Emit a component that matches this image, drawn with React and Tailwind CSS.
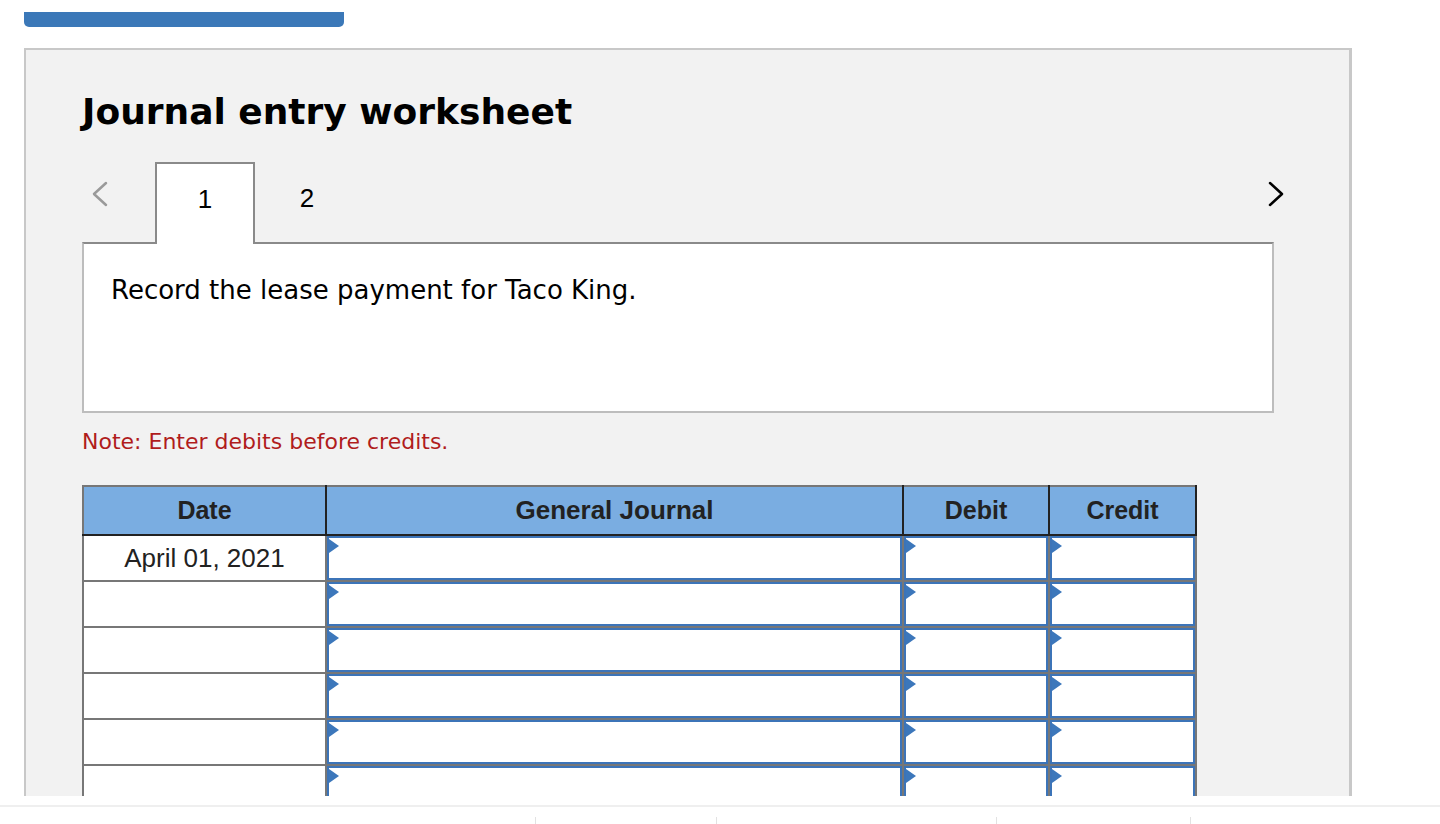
import React from "react";

function Tri() {
  return (
    <svg className="absolute left-0 top-[1px]" width="10" height="14" viewBox="0 0 10 14">
      <polygon points="0,0 10,7 0,14" fill="#3c77bb" />
    </svg>
  );
}

function InputCell() {
  return (
    <td className="border-2 border-[#777777] p-0 h-[46px]">
      <div className="relative h-full w-full border-2 border-[#3c74b8] bg-white">
        <Tri />
      </div>
    </td>
  );
}

export default function App() {
  const rows = ["April 01, 2021", "", "", "", "", ""];
  return (
    <div className="h-[824px] w-[1440px] overflow-hidden bg-white flex flex-col">
      <div className="h-[796px] overflow-hidden shrink-0">
        <div className="ml-[24px] mt-[12px] h-[15px] w-[320px] rounded-b-[5px] bg-[#3b78b8]" />
        <div className="ml-[24px] mt-[21px] w-[1328px] h-[1000px] border-2 border-r-[3px] border-[#c8c8c8] bg-[#f2f2f2] pl-[56px] pr-[76px]">
          <h1
            className="mt-[42px] text-[36px] font-bold leading-[40px] text-black"
            style={{ fontFamily: '"DejaVu Sans", Verdana, sans-serif' }}
          >
            Journal entry worksheet
          </h1>
          <div className="mt-[30px] flex items-end h-[80px]">
            <div className="w-[73px] h-full flex items-center pl-[7px] pb-[16px]">
              <svg width="20" height="28" viewBox="0 0 20 28">
                <polyline points="17,3 5,14 17,25" fill="none" stroke="#9a9a9a" strokeWidth="2.5" strokeLinecap="round" strokeLinejoin="round" />
              </svg>
            </div>
            <div className="relative z-10 w-[100px] h-[82px] -mb-[2px] border-2 border-b-0 border-[#8a8a8a] bg-white flex items-center justify-center pb-[10px] text-[26px] text-black"
              style={{ fontFamily: '"Liberation Sans", Arial, sans-serif' }}>
              1
            </div>
            <div className="w-[104px] h-full flex items-center justify-center pb-[8px] text-[26px] text-black"
              style={{ fontFamily: '"Liberation Sans", Arial, sans-serif' }}>
              2
            </div>
            <div className="flex-1 h-full flex items-center justify-end pb-[16px]">
              <svg width="20" height="28" viewBox="0 0 20 28" className="-mr-[14px]">
                <polyline points="3,3 15,14 3,25" fill="none" stroke="#000000" strokeWidth="2.5" strokeLinecap="round" strokeLinejoin="round" />
              </svg>
            </div>
          </div>
          <div className="h-[171px] w-[1192px] border-2 border-[#bdbdbd] border-t-[#8a8a8a] bg-white pl-[27px] pt-[30px]">
            <p className="text-[26px] leading-[32px] text-black" style={{ fontFamily: '"DejaVu Sans", Verdana, sans-serif' }}>
              Record the lease payment for Taco King.
            </p>
          </div>
          <p className="mt-[15px] text-[22px] leading-[28px] text-[#b01c1c]" style={{ fontFamily: '"DejaVu Sans", Verdana, sans-serif' }}>
            Note: Enter debits before credits.
          </p>
          <table
            className="mt-[29px] border-collapse table-fixed"
            style={{ fontFamily: '"Liberation Sans", Arial, sans-serif' }}
          >
            <colgroup>
              <col className="w-[243px]" />
              <col className="w-[577px]" />
              <col className="w-[146px]" />
              <col className="w-[147px]" />
            </colgroup>
            <thead>
              <tr className="h-[49px] bg-[#7aade1]">
                <th className="border-2 border-[#777777] border-r-[#222222] border-b-[#222222] text-[25px] font-bold text-[#222222]">Date</th>
                <th className="border-2 border-[#777777] border-x-[#222222] border-b-[#222222] text-[26px] font-bold text-[#222222]">General Journal</th>
                <th className="border-2 border-[#777777] border-x-[#222222] border-b-[#222222] text-[25px] font-bold text-[#222222]">Debit</th>
                <th className="border-2 border-[#777777] border-x-[#222222] border-b-[#222222] text-[25px] font-bold text-[#222222]">Credit</th>
              </tr>
            </thead>
            <tbody>
              {rows.map((d, i) => (
                <tr key={i} className="h-[46px]">
                  <td className="border-2 border-[#777777] bg-white text-center text-[26px] text-[#222222] p-0">{d}</td>
                  <InputCell />
                  <InputCell />
                  <InputCell />
                </tr>
              ))}
            </tbody>
          </table>
        </div>
      </div>
      <div className="h-[2px] mt-[9px] bg-[#efefef]" />
      <div className="relative flex-1">
        <div className="absolute left-[535px] top-[10px] h-[8px] w-px bg-[#e2e2e2]" />
        <div className="absolute left-[716px] top-[10px] h-[8px] w-px bg-[#e2e2e2]" />
        <div className="absolute left-[996px] top-[10px] h-[8px] w-px bg-[#e2e2e2]" />
        <div className="absolute left-[1190px] top-[10px] h-[8px] w-px bg-[#e2e2e2]" />
      </div>
    </div>
  );
}
